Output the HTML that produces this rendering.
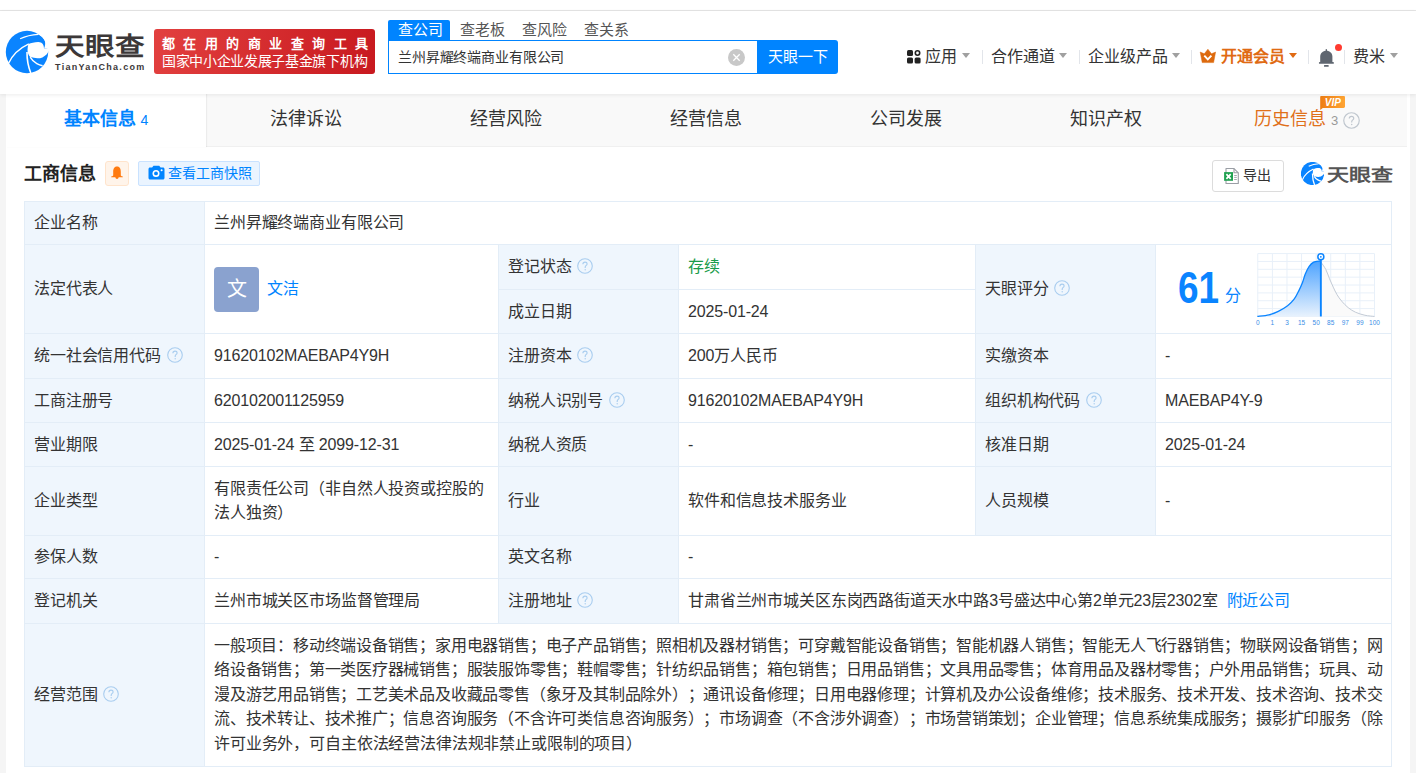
<!DOCTYPE html>
<html lang="zh-CN"><head><meta charset="utf-8">
<style>
*{box-sizing:border-box;margin:0;padding:0}
html,body{text-spacing-trim:space-all;width:1416px;height:773px;overflow:hidden;background:#f5f5f5;font-family:"Liberation Sans",sans-serif;color:#333}
.abs{position:absolute;white-space:nowrap}
#top{position:absolute;left:0;top:0;width:1416px;height:11px;background:#fff;border-bottom:1px solid #e5e5e5}
#hdr{position:absolute;left:0;top:11px;width:1416px;height:83px;background:#fff;box-shadow:0 1px 4px rgba(0,0,0,0.08);z-index:5}
#card{position:absolute;left:6px;top:94px;width:1404px;height:700px;background:#fff}
#tabs{position:absolute;left:0;top:0;width:1401px;height:53px;background:#f9f9f9;border-bottom:1px solid #f0f0f0}
.tab{position:absolute;top:0;height:53px;width:200px;text-align:center;font-size:18px;line-height:50px;color:#333}
.tab.on{background:#fff;color:#0084ff;font-weight:bold;box-shadow:1px 0 1px rgba(0,0,0,0.05)}
.nav{top:35px;font-size:16px;line-height:22px;color:#333}
.caret{top:42px;width:0;height:0;border-left:4.5px solid transparent;border-right:4.5px solid transparent;border-top:5px solid #a0a0a0}
.sep{top:39px;width:1px;height:14px;background:#e2e5ea}
.cell{position:absolute;border:1px solid #e3edf7;background:#fff;font-size:16px;letter-spacing:-0.15px;color:#333;padding:0 9px;display:flex;align-items:center;line-height:22px;white-space:nowrap}
.cell.l{background:#eff6fd}
.q{display:inline-block;vertical-align:middle;margin-left:6px;width:16px;height:16px;position:relative;top:-1px}
.link{color:#0084ff}
.avatar{position:absolute;left:9px;top:22px;width:45px;height:45px;border-radius:4px;background:#8aa2cf;color:#fff;font-size:20px;line-height:45px;text-align:center;letter-spacing:0}
.jl{display:block;text-align:justify;text-align-last:justify;white-space:normal;width:100%}
</style></head><body>
<div id="top"></div>
<div id="hdr">
 <svg class="abs" style="left:2px;top:16px" width="50" height="50" viewBox="0 0 50 50"><circle cx="25" cy="25" r="21.2" fill="#0a84ff"/>
  <path d="M36.2,7.2 C39.8,8.8 42.2,11.5 42.9,14.2 C43.5,16.6 43.1,19.2 42,21.4 L50,22.6 L50,0 L36.2,0 Z" fill="#fff"/>
  <path d="M26.5,17.1 C29,16 32.5,15 36.2,15 C38.6,15 40.6,16.2 41.4,18.2 C41.8,19.2 41.9,20.3 42,21.4 L50,22.6 L50,23.8 L46.9,23.6 C46,26 44.4,28.6 40.4,30.4 C37.2,31.7 32.5,31.4 28.5,30.1 C27,29.3 26,27 25.6,24.6 C25.4,22 25.8,19.2 26.5,17.1 Z" fill="#fff"/>
  <path d="M6.6,36.2 C10,29 17,21.5 26.8,16.9" stroke="#fff" stroke-width="1.4" fill="none"/>
  <path d="M25,25 C24.9,32 26,39 28.8,46" stroke="#fff" stroke-width="1.6" fill="none"/>
  <path d="M28.2,30.2 C29.8,33 32,35.2 34.8,36.6 C36.6,37.6 38.5,38.3 40.6,38.8" stroke="#fff" stroke-width="1.4" fill="none"/>
  <path d="M18.1,11.8 C24,8.9 30.5,7.6 36.4,7.3" stroke="#fff" stroke-width="1.2" fill="none"/></svg>
 <div class="abs" style="left:55px;top:21px;font-size:29.5px;font-weight:bold;color:#3c3838;line-height:34px;letter-spacing:0px;transform:scaleY(0.85);transform-origin:0 0">天眼查</div>
 <div class="abs" style="left:55px;top:50px;font-size:9px;font-weight:bold;color:#3c3838;letter-spacing:1.3px;line-height:12px">TianYanCha.com</div>
 <div class="abs" style="left:154px;top:18px;width:221px;height:45px;border-radius:3px;background:linear-gradient(100deg,#e2403f,#c8191f);color:#fff">
  <div class="abs" style="left:8px;top:7px;font-size:13px;font-weight:bold;letter-spacing:8.45px;line-height:15px">都在用的商业查询工具</div>
  <div class="abs" style="left:8px;top:24px;font-size:14px;letter-spacing:-0.32px;line-height:16px">国家中小企业发展子基金旗下机构</div>
 </div>
 <div class="abs" style="left:388px;top:9px;width:62px;height:20px;background:#0084ff;border-radius:2px 2px 0 0;color:#fff;font-size:15px;line-height:20px;text-align:center;padding-left:2px">查公司</div>
 <div class="abs" style="left:460px;top:9px;font-size:15px;line-height:20px;color:#555">查老板</div>
 <div class="abs" style="left:522px;top:9px;font-size:15px;line-height:20px;color:#555">查风险</div>
 <div class="abs" style="left:584px;top:9px;font-size:15px;line-height:20px;color:#555">查关系</div>
 <div class="abs" style="left:388px;top:29px;width:370px;height:34px;border:1px solid #0084ff;border-right:none;background:#fff">
  <div class="abs" style="left:9px;top:0;font-size:14px;letter-spacing:-0.15px;line-height:32px;color:#333">兰州昇耀终端商业有限公司</div>
  <div class="abs" style="left:339px;top:8px;width:17px;height:17px;border-radius:50%;background:#c8c8c8"></div>
  <svg class="abs" style="left:339px;top:8px" width="17" height="17"><path d="M5.3,5.3 L11.7,11.7 M11.7,5.3 L5.3,11.7" stroke="#fff" stroke-width="1.3"/></svg>
 </div>
 <div class="abs" style="left:757px;top:29px;width:81px;height:34px;background:#0084ff;border-radius:0 3px 3px 0;color:#fff;font-size:15px;letter-spacing:0px;line-height:33px;text-align:center">天眼一下</div>
 <svg class="abs" style="left:907px;top:39px" width="14" height="14" viewBox="0 0 14 14">
  <rect x="0" y="0" width="6" height="6" rx="1.5" fill="#222"/>
  <circle cx="10.5" cy="3" r="2.2" fill="none" stroke="#222" stroke-width="1.6"/>
  <rect x="0" y="7.6" width="6" height="6" rx="1.5" fill="#222"/>
  <rect x="7.6" y="7.6" width="6" height="6" rx="1.5" fill="#222"/>
 </svg>
 <div class="abs nav" style="left:925px">应用</div>
 <div class="abs caret" style="left:962px"></div>
 <div class="abs sep" style="left:982px"></div>
 <div class="abs nav" style="left:991px">合作通道</div>
 <div class="abs caret" style="left:1059px"></div>
 <div class="abs sep" style="left:1079px"></div>
 <div class="abs nav" style="left:1088px">企业级产品</div>
 <div class="abs caret" style="left:1172px"></div>
 <div class="abs sep" style="left:1191px"></div>
 <svg class="abs" style="left:1200px;top:38px" width="16" height="14" viewBox="0 0 16 14" overflow="visible">
  <path d="M0.2,3 L4.3,4.8 L7.9,0.2 L11.5,4.8 L15.6,3 L13.6,13.6 L2.2,13.6 Z" fill="#dd6a0e" stroke="#dd6a0e" stroke-width="0.5" stroke-linejoin="round"/>
  <path d="M4.3,6.6 L7.8,10.4 L11.4,6.6" stroke="#fff" stroke-width="1.9" fill="none"/>
 </svg>
 <div class="abs nav" style="left:1221px;color:#e06a13;font-weight:bold">开通会员</div>
 <div class="abs caret" style="left:1289px;border-top-color:#e06a13"></div>
 <div class="abs sep" style="left:1308px"></div>
 <svg class="abs" style="left:1318px;top:38px" width="17" height="19" viewBox="0 0 17 19">
  <rect x="7.7" y="0" width="1.3" height="2.5" rx="0.6" fill="#5f6670"/>
  <path d="M2.2,13.2 L2.2,7.8 C2.2,4.2 4.8,1.8 8.35,1.8 C11.9,1.8 14.4,4.2 14.4,7.8 L14.4,13.2 Z" fill="#5f6670"/>
  <rect x="0.9" y="12.9" width="15" height="1.9" rx="0.9" fill="#5f6670"/>
  <rect x="6" y="16" width="4.7" height="1.8" rx="0.6" fill="#5f6670"/>
 </svg>
 <div class="abs" style="left:1335px;top:33px;width:7px;height:7px;border-radius:50%;background:#ff3b30"></div>
 <div class="abs sep" style="left:1344px"></div>
 <div class="abs nav" style="left:1353px">费米</div>
 <div class="abs caret" style="left:1390px"></div>
</div>
<div id="card">
 <div id="tabs">
  <div class="tab on" style="left:0">基本信息 <span style="font-weight:normal;font-size:14px">4</span></div>
  <div class="tab" style="left:200px">法律诉讼</div>
  <div class="tab" style="left:400px">经营风险</div>
  <div class="tab" style="left:600px">经营信息</div>
  <div class="tab" style="left:800px">公司发展</div>
  <div class="tab" style="left:1000px">知识产权</div>
  <div class="tab" style="left:1200px;color:#e0701a;text-align:left;padding-left:48px">历史信息 <span style="font-size:13px;color:#999">3</span></div>
  <svg class="abs" style="left:1337px;top:18px" width="17" height="17" viewBox="0 0 16 16"><circle cx="8" cy="8" r="7.3" fill="none" stroke="#bfc6ce" stroke-width="1.1"/><path d="M5.9,6.2 C5.9,4.9 6.8,4.1 8,4.1 C9.2,4.1 10.1,4.9 10.1,6 C10.1,7.3 8.2,7.6 8.2,9.1 L8.2,9.9" fill="none" stroke="#bfc6ce" stroke-width="1.1"/><circle cx="8.2" cy="11.8" r="0.7" fill="#bfc6ce"/></svg>
  <svg class="abs" style="left:1313px;top:1px" width="27" height="17" viewBox="0 0 27 17"><defs><linearGradient id="vg" x1="0" y1="0" x2="1" y2="0"><stop offset="0" stop-color="#ee7d12"/><stop offset="1" stop-color="#ffa534"/></linearGradient></defs><path d="M2.3,1 L24.6,1 C25.5,1 26,1.5 26,2.4 L26,11.5 C26,12.4 25.5,12.9 24.6,12.9 L3.8,12.9 L1.2,14.9 L1.2,2.4 C1.2,1.5 1.5,1 2.3,1 Z" fill="url(#vg)"/><text x="13.8" y="10.8" font-family="Liberation Sans" font-size="10" font-weight="bold" font-style="italic" fill="#fff" text-anchor="middle">VIP</text></svg>
 </div>

 <div class="abs" style="left:18px;top:68px;font-size:18px;font-weight:bold;color:#222;line-height:24px">工商信息</div>
 <div class="abs" style="left:99px;top:67px;width:24px;height:25px;background:#fff4ea;border:1px solid #ffe4cc;border-radius:3px"></div>
 <svg class="abs" style="left:104px;top:72px" width="14" height="14" viewBox="0 0 14 14"><path d="M7,0.6 C10,0.6 10.8,3.2 10.8,6 L10.8,9.4 C11.2,10 12,10.2 12.8,10.4 L12.8,11.2 L1.2,11.2 L1.2,10.4 C2,10.2 2.8,10 3.2,9.4 L3.2,6 C3.2,3.2 4,0.6 7,0.6 Z" fill="#ff7a0f"/><path d="M5.4,11 L8.6,11 C8.6,12.2 7.9,13 7,13 C6.1,13 5.4,12.2 5.4,11 Z" fill="#ff7a0f"/></svg>
 <div class="abs" style="left:132px;top:67px;width:122px;height:25px;background:#eaf4ff;border:1px solid #c9e2ff;border-radius:2px"></div>
 <svg class="abs" style="left:142px;top:71px" width="17" height="15" viewBox="0 0 17 15"><path d="M5.5,0.8 L11.2,0.8 L12.6,2.4 L15,2.4 C15.8,2.4 16.5,3.1 16.5,3.9 L16.5,13 C16.5,13.8 15.8,14.5 15,14.5 L2,14.5 C1.2,14.5 0.5,13.8 0.5,13 L0.5,3.9 C0.5,3.1 1.2,2.4 2,2.4 L4.1,2.4 Z" fill="#0084ff"/><circle cx="8" cy="8.4" r="3.5" fill="#fff"/><circle cx="8" cy="8.4" r="1.9" fill="#0084ff"/><circle cx="13.6" cy="5.2" r="1" fill="#fff"/></svg>
 <div class="abs" style="left:162px;top:67px;font-size:14px;line-height:24px;color:#0084ff">查看工商快照</div>
 <div class="abs" style="left:1206px;top:66px;width:72px;height:32px;border:1px solid #dcdcdc;border-radius:3px;background:#fff"></div>
 <svg class="abs" style="left:1217px;top:74px" width="17" height="17" viewBox="0 0 17 17"><path d="M3,0.55 L11,0.55 L15.3,4.8 L15.3,15.5 L3,15.5 Z" fill="#fff" stroke="#9a9ea5" stroke-width="1.1" stroke-linejoin="round"/><path d="M11,0.55 L11,4.8 L15.3,4.8" fill="none" stroke="#9a9ea5" stroke-width="1.1"/><rect x="1.1" y="4.1" width="8.9" height="8.7" fill="#1ea04f"/><path d="M3.4,6.1 L7.7,10.9 M7.7,6.1 L3.4,10.9" stroke="#fff" stroke-width="1.7"/><path d="M11.2,7.5 L13.8,7.5 M11.2,9.4 L13.8,9.4 M11.2,11.5 L13.8,11.5" stroke="#9a9ea5" stroke-width="0.9"/></svg>
 <div class="abs" style="left:1237px;top:70px;font-size:14px;line-height:22px;color:#333">导出</div>
 <svg class="abs" style="left:1295px;top:68px" width="23" height="23" viewBox="4 4 42 42"><circle cx="25" cy="25" r="21.2" fill="#0a84ff"/>
  <path d="M36.2,7.2 C39.8,8.8 42.2,11.5 42.9,14.2 C43.5,16.6 43.1,19.2 42,21.4 L50,22.6 L50,0 L36.2,0 Z" fill="#fff"/>
  <path d="M26.5,17.1 C29,16 32.5,15 36.2,15 C38.6,15 40.6,16.2 41.4,18.2 C41.8,19.2 41.9,20.3 42,21.4 L50,22.6 L50,23.8 L46.9,23.6 C46,26 44.4,28.6 40.4,30.4 C37.2,31.7 32.5,31.4 28.5,30.1 C27,29.3 26,27 25.6,24.6 C25.4,22 25.8,19.2 26.5,17.1 Z" fill="#fff"/>
  <path d="M6.6,36.2 C10,29 17,21.5 26.8,16.9" stroke="#fff" stroke-width="2.2" fill="none"/>
  <path d="M25,25 C24.9,32 26,39 28.8,46" stroke="#fff" stroke-width="2.4" fill="none"/>
  <path d="M28.2,30.2 C29.8,33 32,35.2 34.8,36.6 C36.6,37.6 38.5,38.3 40.6,38.8" stroke="#fff" stroke-width="2.2" fill="none"/>
  <path d="M18.1,11.8 C24,8.9 30.5,7.6 36.4,7.3" stroke="#fff" stroke-width="2" fill="none"/></svg>
 <div class="abs" style="left:1321px;top:70px;font-size:22px;font-weight:bold;color:#555;line-height:28px;transform:scaleY(0.8);transform-origin:0 0">天眼查</div>

<div id="tbl">
<div class="cell l" style="left:18px;top:107px;width:181px;height:44px;">企业名称</div>
<div class="cell" style="left:198px;top:107px;width:1188px;height:44px;">兰州昇耀终端商业有限公司</div>
<div class="cell l" style="left:18px;top:150px;width:181px;height:90px;">法定代表人</div>
<div class="cell" style="left:198px;top:150px;width:295px;height:90px;"><div class="avatar">文</div><span class="link" style="position:absolute;left:62px;top:33px;line-height:22px">文洁</span></div>
<div class="cell l" style="left:492px;top:150px;width:181px;height:46px;">登记状态<svg class="q" viewBox="0 0 16 16"><circle cx="8" cy="8" r="7.3" fill="none" stroke="#a9cdef" stroke-width="1.1"/><path d="M5.9,6.2 C5.9,4.9 6.8,4.1 8,4.1 C9.2,4.1 10.1,4.9 10.1,6 C10.1,7.3 8.2,7.6 8.2,9.1 L8.2,9.9" fill="none" stroke="#a9cdef" stroke-width="1.1"/><circle cx="8.2" cy="11.8" r="0.7" fill="#a9cdef"/></svg></div>
<div class="cell" style="left:672px;top:150px;width:298px;height:46px;"><span style="color:#1a9b4a">存续</span></div>
<div class="cell l" style="left:492px;top:195px;width:181px;height:45px;">成立日期</div>
<div class="cell" style="left:672px;top:195px;width:298px;height:45px;">2025-01-24</div>
<div class="cell l" style="left:969px;top:150px;width:181px;height:90px;">天眼评分<svg class="q" viewBox="0 0 16 16"><circle cx="8" cy="8" r="7.3" fill="none" stroke="#a9cdef" stroke-width="1.1"/><path d="M5.9,6.2 C5.9,4.9 6.8,4.1 8,4.1 C9.2,4.1 10.1,4.9 10.1,6 C10.1,7.3 8.2,7.6 8.2,9.1 L8.2,9.9" fill="none" stroke="#a9cdef" stroke-width="1.1"/><circle cx="8.2" cy="11.8" r="0.7" fill="#a9cdef"/></svg></div>
<div class="cell" style="left:1149px;top:150px;width:237px;height:90px;"></div>
<div class="cell l" style="left:18px;top:239px;width:181px;height:46px;">统一社会信用代码<svg class="q" viewBox="0 0 16 16"><circle cx="8" cy="8" r="7.3" fill="none" stroke="#a9cdef" stroke-width="1.1"/><path d="M5.9,6.2 C5.9,4.9 6.8,4.1 8,4.1 C9.2,4.1 10.1,4.9 10.1,6 C10.1,7.3 8.2,7.6 8.2,9.1 L8.2,9.9" fill="none" stroke="#a9cdef" stroke-width="1.1"/><circle cx="8.2" cy="11.8" r="0.7" fill="#a9cdef"/></svg></div>
<div class="cell" style="left:198px;top:239px;width:295px;height:46px;">91620102MAEBAP4Y9H</div>
<div class="cell l" style="left:492px;top:239px;width:181px;height:46px;">注册资本<svg class="q" viewBox="0 0 16 16"><circle cx="8" cy="8" r="7.3" fill="none" stroke="#a9cdef" stroke-width="1.1"/><path d="M5.9,6.2 C5.9,4.9 6.8,4.1 8,4.1 C9.2,4.1 10.1,4.9 10.1,6 C10.1,7.3 8.2,7.6 8.2,9.1 L8.2,9.9" fill="none" stroke="#a9cdef" stroke-width="1.1"/><circle cx="8.2" cy="11.8" r="0.7" fill="#a9cdef"/></svg></div>
<div class="cell" style="left:672px;top:239px;width:298px;height:46px;">200万人民币</div>
<div class="cell l" style="left:969px;top:239px;width:181px;height:46px;">实缴资本</div>
<div class="cell" style="left:1149px;top:239px;width:237px;height:46px;">-</div>
<div class="cell l" style="left:18px;top:284px;width:181px;height:45px;">工商注册号</div>
<div class="cell" style="left:198px;top:284px;width:295px;height:45px;">620102001125959</div>
<div class="cell l" style="left:492px;top:284px;width:181px;height:45px;">纳税人识别号<svg class="q" viewBox="0 0 16 16"><circle cx="8" cy="8" r="7.3" fill="none" stroke="#a9cdef" stroke-width="1.1"/><path d="M5.9,6.2 C5.9,4.9 6.8,4.1 8,4.1 C9.2,4.1 10.1,4.9 10.1,6 C10.1,7.3 8.2,7.6 8.2,9.1 L8.2,9.9" fill="none" stroke="#a9cdef" stroke-width="1.1"/><circle cx="8.2" cy="11.8" r="0.7" fill="#a9cdef"/></svg></div>
<div class="cell" style="left:672px;top:284px;width:298px;height:45px;">91620102MAEBAP4Y9H</div>
<div class="cell l" style="left:969px;top:284px;width:181px;height:45px;">组织机构代码<svg class="q" viewBox="0 0 16 16"><circle cx="8" cy="8" r="7.3" fill="none" stroke="#a9cdef" stroke-width="1.1"/><path d="M5.9,6.2 C5.9,4.9 6.8,4.1 8,4.1 C9.2,4.1 10.1,4.9 10.1,6 C10.1,7.3 8.2,7.6 8.2,9.1 L8.2,9.9" fill="none" stroke="#a9cdef" stroke-width="1.1"/><circle cx="8.2" cy="11.8" r="0.7" fill="#a9cdef"/></svg></div>
<div class="cell" style="left:1149px;top:284px;width:237px;height:45px;">MAEBAP4Y-9</div>
<div class="cell l" style="left:18px;top:328px;width:181px;height:45px;">营业期限</div>
<div class="cell" style="left:198px;top:328px;width:295px;height:45px;">2025-01-24 至 2099-12-31</div>
<div class="cell l" style="left:492px;top:328px;width:181px;height:45px;">纳税人资质</div>
<div class="cell" style="left:672px;top:328px;width:298px;height:45px;">-</div>
<div class="cell l" style="left:969px;top:328px;width:181px;height:45px;">核准日期</div>
<div class="cell" style="left:1149px;top:328px;width:237px;height:45px;">2025-01-24</div>
<div class="cell l" style="left:18px;top:372px;width:181px;height:70px;">企业类型</div>
<div class="cell" style="left:198px;top:372px;width:295px;height:70px;"><div style="white-space:normal;line-height:24.5px">有限责任公司（非自然人投资或控股的<br>法人独资）</div></div>
<div class="cell l" style="left:492px;top:372px;width:181px;height:70px;">行业</div>
<div class="cell" style="left:672px;top:372px;width:298px;height:70px;">软件和信息技术服务业</div>
<div class="cell l" style="left:969px;top:372px;width:181px;height:70px;">人员规模</div>
<div class="cell" style="left:1149px;top:372px;width:237px;height:70px;">-</div>
<div class="cell l" style="left:18px;top:441px;width:181px;height:44px;">参保人数</div>
<div class="cell" style="left:198px;top:441px;width:295px;height:44px;">-</div>
<div class="cell l" style="left:492px;top:441px;width:181px;height:44px;">英文名称</div>
<div class="cell" style="left:672px;top:441px;width:714px;height:44px;">-</div>
<div class="cell l" style="left:18px;top:484px;width:181px;height:46px;">登记机关</div>
<div class="cell" style="left:198px;top:484px;width:295px;height:46px;">兰州市城关区市场监督管理局</div>
<div class="cell l" style="left:492px;top:484px;width:181px;height:46px;">注册地址<svg class="q" viewBox="0 0 16 16"><circle cx="8" cy="8" r="7.3" fill="none" stroke="#a9cdef" stroke-width="1.1"/><path d="M5.9,6.2 C5.9,4.9 6.8,4.1 8,4.1 C9.2,4.1 10.1,4.9 10.1,6 C10.1,7.3 8.2,7.6 8.2,9.1 L8.2,9.9" fill="none" stroke="#a9cdef" stroke-width="1.1"/><circle cx="8.2" cy="11.8" r="0.7" fill="#a9cdef"/></svg></div>
<div class="cell" style="left:672px;top:484px;width:714px;height:46px;">甘肃省兰州市城关区东岗西路街道天水中路3号盛达中心第2单元23层2302室<span class="link" style="margin-left:9px">附近公司</span></div>
<div class="cell l" style="left:18px;top:529px;width:181px;height:144px;">经营范围<svg class="q" viewBox="0 0 16 16"><circle cx="8" cy="8" r="7.3" fill="none" stroke="#a9cdef" stroke-width="1.1"/><path d="M5.9,6.2 C5.9,4.9 6.8,4.1 8,4.1 C9.2,4.1 10.1,4.9 10.1,6 C10.1,7.3 8.2,7.6 8.2,9.1 L8.2,9.9" fill="none" stroke="#a9cdef" stroke-width="1.1"/><circle cx="8.2" cy="11.8" r="0.7" fill="#a9cdef"/></svg></div>
<div class="cell" style="left:198px;top:529px;width:1188px;height:144px;"><div style="width:100%;line-height:24.5px;white-space:normal;letter-spacing:-0.6px"><div class="jl">一般项目：移动终端设备销售；家用电器销售；电子产品销售；照相机及器材销售；可穿戴智能设备销售；智能机器人销售；智能无人飞行器销售；物联网设备销售；网</div><div class="jl">络设备销售；第一类医疗器械销售；服装服饰零售；鞋帽零售；针纺织品销售；箱包销售；日用品销售；文具用品零售；体育用品及器材零售；户外用品销售；玩具、动</div><div class="jl">漫及游艺用品销售；工艺美术品及收藏品零售（象牙及其制品除外）；通讯设备修理；日用电器修理；计算机及办公设备维修；技术服务、技术开发、技术咨询、技术交</div><div class="jl">流、技术转让、技术推广；信息咨询服务（不含许可类信息咨询服务）；市场调查（不含涉外调查）；市场营销策划；企业管理；信息系统集成服务；摄影扩印服务（除</div><div style="letter-spacing:-0.15px;white-space:nowrap">许可业务外，可自主依法经营法律法规非禁止或限制的项目）</div></div></div>

</div>
<svg class="abs" style="left:1238px;top:151px" width="145" height="88" viewBox="0 0 145 88">
<defs><linearGradient id="bg1" x1="0" y1="0" x2="0" y2="1"><stop offset="0" stop-color="#4da3ff"/><stop offset="1" stop-color="#e8f2fd"/></linearGradient></defs>
<line x1="13.79" y1="8.59" x2="13.79" y2="71.46" stroke="#e8f0f9" stroke-width="1"/><line x1="28.38" y1="8.59" x2="28.38" y2="71.46" stroke="#e8f0f9" stroke-width="1"/><line x1="42.97" y1="8.59" x2="42.97" y2="71.46" stroke="#e8f0f9" stroke-width="1"/><line x1="57.56" y1="8.59" x2="57.56" y2="71.46" stroke="#e8f0f9" stroke-width="1"/><line x1="72.15" y1="8.59" x2="72.15" y2="71.46" stroke="#e8f0f9" stroke-width="1"/><line x1="86.74" y1="8.59" x2="86.74" y2="71.46" stroke="#e8f0f9" stroke-width="1"/><line x1="101.33" y1="8.59" x2="101.33" y2="71.46" stroke="#e8f0f9" stroke-width="1"/><line x1="115.92" y1="8.59" x2="115.92" y2="71.46" stroke="#e8f0f9" stroke-width="1"/><line x1="130.50" y1="8.59" x2="130.50" y2="71.46" stroke="#e8f0f9" stroke-width="1"/><line x1="13.79" y1="8.59" x2="130.50" y2="8.59" stroke="#e8f0f9" stroke-width="1"/><line x1="13.79" y1="16.45" x2="130.50" y2="16.45" stroke="#e8f0f9" stroke-width="1"/><line x1="13.79" y1="24.31" x2="130.50" y2="24.31" stroke="#e8f0f9" stroke-width="1"/><line x1="13.79" y1="32.17" x2="130.50" y2="32.17" stroke="#e8f0f9" stroke-width="1"/><line x1="13.79" y1="40.02" x2="130.50" y2="40.02" stroke="#e8f0f9" stroke-width="1"/><line x1="13.79" y1="47.88" x2="130.50" y2="47.88" stroke="#e8f0f9" stroke-width="1"/><line x1="13.79" y1="55.74" x2="130.50" y2="55.74" stroke="#e8f0f9" stroke-width="1"/><line x1="13.79" y1="63.60" x2="130.50" y2="63.60" stroke="#e8f0f9" stroke-width="1"/><line x1="13.79" y1="71.46" x2="130.50" y2="71.46" stroke="#e8f0f9" stroke-width="1"/>
<path d="M76.85,16.97 C77.68,18.21 80.35,21.63 81.79,24.42 C83.23,27.22 84.27,30.79 85.52,33.74 C86.76,36.69 88.00,39.48 89.24,42.12 C90.48,44.76 91.57,47.24 92.97,49.57 C94.36,51.90 95.76,53.92 97.62,56.09 C99.49,58.27 101.82,60.75 104.14,62.61 C106.47,64.48 108.80,66.00 111.60,67.27 C114.39,68.54 117.76,69.55 120.91,70.25 C124.06,70.95 128.91,71.26 130.50,71.46 L130.50,71.46 L76.85,71.46 Z" fill="#fafafa"/>
<path d="M13.33,71.46 C15.27,71.20 21.48,70.73 24.97,69.88 C28.46,69.02 31.18,67.86 34.29,66.34 C37.39,64.82 40.96,62.77 43.60,60.75 C46.24,58.73 48.26,56.71 50.12,54.23 C51.98,51.75 53.38,48.64 54.78,45.85 C56.18,43.05 57.42,40.26 58.50,37.46 C59.59,34.67 60.21,31.72 61.30,29.08 C62.38,26.44 63.63,23.62 65.02,21.63 C66.42,19.64 67.97,18.09 69.68,17.16 C71.39,16.23 74.07,16.20 75.27,16.04 C76.47,15.88 76.59,16.20 76.85,16.23 L76.85,71.46 L13.33,71.46 Z" fill="url(#bg1)"/>
<path d="M13.33,71.46 C15.27,71.20 21.48,70.73 24.97,69.88 C28.46,69.02 31.18,67.86 34.29,66.34 C37.39,64.82 40.96,62.77 43.60,60.75 C46.24,58.73 48.26,56.71 50.12,54.23 C51.98,51.75 53.38,48.64 54.78,45.85 C56.18,43.05 57.42,40.26 58.50,37.46 C59.59,34.67 60.21,31.72 61.30,29.08 C62.38,26.44 63.63,23.62 65.02,21.63 C66.42,19.64 67.97,18.09 69.68,17.16 C71.39,16.23 74.07,16.20 75.27,16.04 C76.47,15.88 76.59,16.20 76.85,16.23" fill="none" stroke="#0a84ff" stroke-width="1.3"/>
<path d="M76.85,16.97 C77.68,18.21 80.35,21.63 81.79,24.42 C83.23,27.22 84.27,30.79 85.52,33.74 C86.76,36.69 88.00,39.48 89.24,42.12 C90.48,44.76 91.57,47.24 92.97,49.57 C94.36,51.90 95.76,53.92 97.62,56.09 C99.49,58.27 101.82,60.75 104.14,62.61 C106.47,64.48 108.80,66.00 111.60,67.27 C114.39,68.54 117.76,69.55 120.91,70.25 C124.06,70.95 128.91,71.26 130.50,71.46" fill="none" stroke="#c3cbd6" stroke-width="1"/>
<line x1="76.85" y1="11.85" x2="76.85" y2="71.46" stroke="#0a84ff" stroke-width="1.9"/>
<circle cx="76.85" cy="11.85" r="3" fill="#fff" stroke="#0a84ff" stroke-width="1.5"/>
<circle cx="76.85" cy="11.85" r="0.9" fill="#0a84ff"/>
<text x="13.79" y="79.90" font-size="6.5" fill="#3a8ee6" text-anchor="middle" font-family="Liberation Sans">0</text><text x="28.38" y="79.90" font-size="6.5" fill="#3a8ee6" text-anchor="middle" font-family="Liberation Sans">1</text><text x="42.97" y="79.90" font-size="6.5" fill="#3a8ee6" text-anchor="middle" font-family="Liberation Sans">3</text><text x="57.56" y="79.90" font-size="6.5" fill="#3a8ee6" text-anchor="middle" font-family="Liberation Sans">15</text><text x="72.15" y="79.90" font-size="6.5" fill="#3a8ee6" text-anchor="middle" font-family="Liberation Sans">50</text><text x="86.74" y="79.90" font-size="6.5" fill="#3a8ee6" text-anchor="middle" font-family="Liberation Sans">85</text><text x="101.33" y="79.90" font-size="6.5" fill="#3a8ee6" text-anchor="middle" font-family="Liberation Sans">97</text><text x="115.92" y="79.90" font-size="6.5" fill="#3a8ee6" text-anchor="middle" font-family="Liberation Sans">99</text><text x="130.50" y="79.90" font-size="6.5" fill="#3a8ee6" text-anchor="middle" font-family="Liberation Sans">100</text>
</svg>
<div class="abs" style="left:1172px;top:170px;font-size:45px;font-weight:bold;color:#0a84ff;line-height:48px;transform:scaleX(0.82);transform-origin:0 0">61</div>
<div class="abs" style="left:1219px;top:192px;font-size:16px;color:#0a84ff;line-height:20px">分</div>

</div>
</body></html>
